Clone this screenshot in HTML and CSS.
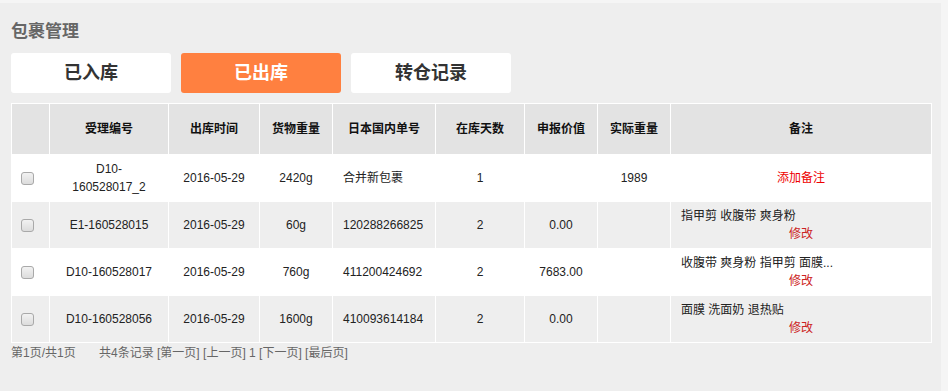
FILE: index.html
```html
<!DOCTYPE html>
<html lang="zh-CN">
<head>
    <meta charset="UTF-8">
    <meta name="viewport" content="width=device-width, initial-scale=1.0">
    <title>包裹管理</title>
    <link rel="stylesheet" href="styles.css">
</head>
<body>
    <div class="panel">
        <h2 class="title">包裹管理</h2>

        <div class="tabs">
            <a class="tab">已入库</a>
            <a class="tab active">已出库</a>
            <a class="tab">转仓记录</a>
        </div>

        <table class="list">
            <colgroup>
                <col class="c-check">
                <col class="c-no">
                <col class="c-date">
                <col class="c-weight">
                <col class="c-jpno">
                <col class="c-days">
                <col class="c-value">
                <col class="c-real">
                <col class="c-note">
            </colgroup>
            <thead>
                <tr>
                    <th></th>
                    <th>受理编号</th>
                    <th>出库时间</th>
                    <th>货物重量</th>
                    <th>日本国内单号</th>
                    <th>在库天数</th>
                    <th>申报价值</th>
                    <th>实际重量</th>
                    <th>备注</th>
                </tr>
            </thead>
            <tbody>
                <tr>
                    <td class="check"><input type="checkbox"></td>
                    <td>D10-160528017_2</td>
                    <td>2016-05-29</td>
                    <td>2420g</td>
                    <td class="left">合并新包裹</td>
                    <td>1</td>
                    <td></td>
                    <td>1989</td>
                    <td><a class="add-note">添加备注</a></td>
                </tr>
                <tr>
                    <td class="check"><input type="checkbox"></td>
                    <td>E1-160528015</td>
                    <td>2016-05-29</td>
                    <td>60g</td>
                    <td class="left">120288266825</td>
                    <td>2</td>
                    <td>0.00</td>
                    <td></td>
                    <td class="note">
                        <div class="note-text">指甲剪 收腹带 爽身粉</div>
                        <a class="edit">修改</a>
                    </td>
                </tr>
                <tr>
                    <td class="check"><input type="checkbox"></td>
                    <td>D10-160528017</td>
                    <td>2016-05-29</td>
                    <td>760g</td>
                    <td class="left">411200424692</td>
                    <td>2</td>
                    <td>7683.00</td>
                    <td></td>
                    <td class="note">
                        <div class="note-text">收腹带 爽身粉 指甲剪 面膜...</div>
                        <a class="edit">修改</a>
                    </td>
                </tr>
                <tr>
                    <td class="check"><input type="checkbox"></td>
                    <td>D10-160528056</td>
                    <td>2016-05-29</td>
                    <td>1600g</td>
                    <td class="left">410093614184</td>
                    <td>2</td>
                    <td>0.00</td>
                    <td></td>
                    <td class="note">
                        <div class="note-text">面膜 洗面奶 退热贴</div>
                        <a class="edit">修改</a>
                    </td>
                </tr>
            </tbody>
        </table>

        <div class="pager">
            <span>第1页/共1页</span>
            <span class="pager-links">共4条记录 [第一页] [上一页] 1 [下一页] [最后页]</span>
        </div>
    </div>
</body>
</html>
```

FILE: styles.css
```css
body {
    margin: 0;
    padding: 0;
    background-color: #f5f5f5;
    font-family: "Liberation Sans", "Noto Sans CJK SC", sans-serif;
    font-size: 12px;
    color: #222;
}
.panel {
    margin-top: 3px;
    width: 941px;
    height: 388px;
    box-sizing: border-box;
    padding: 18px 11px 0;
    background-color: #eee;
}
.title {
    margin: 0;
    font-size: 17px;
    line-height: 22px;
    color: #666;
    font-weight: bold;
}
.tabs {
    display: flex;
    gap: 10px;
    margin-top: 10px;
}
.tab {
    width: 160px;
    height: 40px;
    line-height: 40px;
    text-align: center;
    background: #fff;
    border-radius: 3px;
    font-size: 18px;
    font-weight: bold;
    color: #333;
    cursor: pointer;
}
.tab.active {
    background: #ff8040;
    color: #fff;
}
.list {
    margin-top: 10px;
    width: 920px;
    border-collapse: collapse;
    table-layout: fixed;
}
.c-check { width: 38px; }
.c-no { width: 119px; }
.c-date { width: 91px; }
.c-weight { width: 73px; }
.c-jpno { width: 103px; }
.c-days { width: 89px; }
.c-value { width: 73px; }
.c-real { width: 73px; }
.c-note { width: 261px; }
.list th, .list td {
    border: 1px solid #fff;
    padding: 5px 10px;
    text-align: center;
    line-height: 18px;
}
.list th {
    height: 40px;
    background: #e3e3e3;
    font-weight: bold;
    color: #111;
}
.list td {
    height: 36px;
}
.list tbody tr:nth-child(odd) td {
    background: #fff;
}
.list tbody tr:nth-child(even) td {
    background: #eee;
}
.list td.check {
    text-align: left;
    padding: 0 0 0 5px;
}
.check input {
    -webkit-appearance: none;
    appearance: none;
    width: 13px;
    height: 13px;
    margin: 3px 3px 3px 4px;
    vertical-align: middle;
    border: 1px solid #a9a9a9;
    border-radius: 3px;
    background: linear-gradient(#f2f2f2, #dcdcdc);
    box-sizing: border-box;
}
.list td.left {
    text-align: left;
}
.note-text {
    text-align: left;
}
.add-note {
    color: #e00;
}
.edit {
    color: #c22;
}
.pager {
    margin-top: 1px;
    line-height: 18px;
    color: #666;
}
.pager-links {
    margin-left: 20px;
}
```
